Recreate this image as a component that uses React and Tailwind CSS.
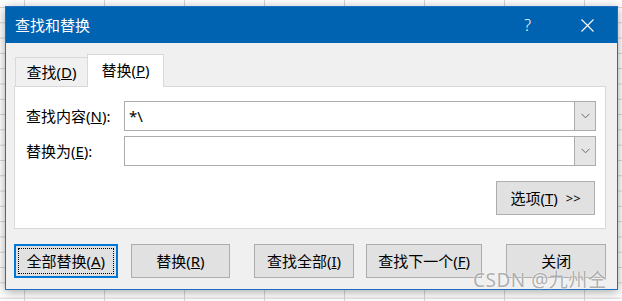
import React from 'react';

const font = { fontFamily: '"Noto Sans", "Noto Sans CJK SC", sans-serif' };

function Chevron() {
  return (
    <svg width="9" height="6" viewBox="0 0 9 6" fill="none">
      <path d="M0.5 0.8 L4.5 4.8 L8.5 0.8" stroke="#666" strokeWidth="1" />
    </svg>
  );
}

function ComboBox({ value }) {
  return (
    <div className="flex h-[30px] flex-1 border border-[#acacac] bg-white">
      <div className="flex flex-1 items-center pl-[4px] text-[15px] leading-none text-black">{value}</div>
      <div className="flex w-[21px] items-center justify-center border-l border-[#acacac] bg-[#e5e5e5]">
        <Chevron />
      </div>
    </div>
  );
}

function Btn({ children, width, className = '' }) {
  return (
    <button
      className={`flex h-[34px] items-center justify-center border border-[#adadad] bg-[#e1e1e1] text-[15px] leading-none text-black ${width} ${className}`}
    >
      {children}
    </button>
  );
}

function U({ children }) {
  return <span className="underline underline-offset-1">{children}</span>;
}

export default function App() {
  return (
    <div
      className="relative h-[301px] w-[622px] overflow-hidden bg-white bg-[linear-gradient(to_right,#d6d6d6_1px,transparent_1px),linear-gradient(to_bottom,#d6d6d6_1px,transparent_1px)] bg-[size:80px_15.3px] bg-[position:24px_7px] pl-[5px] pt-[6px]"
      style={font}
    >
      {/* dialog */}
      <div className="flex h-[284px] w-[613px] flex-col border border-[#1f6fc0] bg-[#f0f0f0] shadow-[0_2px_10px_rgba(0,0,0,0.35)]">
        {/* title bar */}
        <div className="flex h-[36px] items-center bg-[#0063b1] pl-[9px] pr-[23px] text-white">
          <span className="text-[15px] leading-none">查找和替换</span>
          <span className="ml-auto text-[16px] font-light leading-none">?</span>
          <svg className="ml-[50px]" width="13" height="13" viewBox="0 0 13 13">
            <path d="M0.5 0.5 L12.5 12.5 M12.5 0.5 L0.5 12.5" stroke="white" strokeWidth="1.1" />
          </svg>
        </div>

        {/* body */}
        <div className="flex flex-col pl-[8px] pr-[11px] pt-[11px]">
          {/* tabs */}
          <div className="flex h-[32px] items-end pl-[1px]">
            <div className="flex h-[29px] w-[72px] items-center justify-center border-l border-t border-[#d9d9d9] text-[15px] leading-none text-black">
              查找(<U>D</U>)
            </div>
            <div className="relative z-10 -mb-px flex h-[33px] w-[77px] items-center justify-center border-x border-t border-[#d9d9d9] bg-white pb-[2px] text-[15px] leading-none text-black">
              替换(<U>P</U>)
            </div>
          </div>

          {/* panel */}
          <div className="flex h-[143px] w-[592px] flex-col border border-[#d9d9d9] bg-white pl-[11px] pr-[9px] pt-[14px]">
            <div className="flex items-center">
              <div className="w-[98px] text-[15px] leading-none text-black">查找内容(<U>N</U>):</div>
              <ComboBox value="*\" />
            </div>
            <div className="mt-[5px] flex items-center">
              <div className="w-[98px] text-[15px] leading-none text-black">替换为(<U>E</U>):</div>
              <ComboBox value="" />
            </div>
            <div className="mt-[15px] flex justify-end pr-[1px]">
              <Btn width="w-[99px]">
                <span>选项(<U>T</U>)</span>
                <span className="ml-[8px] text-[13px]">&gt;&gt;</span>
              </Btn>
            </div>
          </div>

          {/* bottom buttons */}
          <div className="mt-[15px] flex">
            <button className="flex h-[34px] w-[104px] border-2 border-[#0078d7] bg-[#e1e1e1] p-[2px]">
              <div className="flex flex-1 items-center justify-center border border-dotted border-black text-[15px] leading-none text-black">
                全部替换(<U>A</U>)
              </div>
            </button>
            <Btn width="w-[100px]" className="ml-[13px]">
              替换(<U>R</U>)
            </Btn>
            <Btn width="w-[100px]" className="ml-[24px]">
              查找全部(<U>I</U>)
            </Btn>
            <Btn width="w-[117px]" className="ml-[12px]">
              查找下一个(<U>F</U>)
            </Btn>
            <Btn width="w-[100px]" className="ml-[24px]">
              关闭
            </Btn>
          </div>
        </div>
      </div>

      {/* watermark */}
      <div className="absolute left-[473px] top-[271px] text-[19px] leading-none tracking-[0.5px] text-[#a8a8a8] opacity-90 [text-shadow:0_0_2px_#fff,0_0_1px_#fff]">
        CSDN @九州仝
      </div>
    </div>
  );
}
